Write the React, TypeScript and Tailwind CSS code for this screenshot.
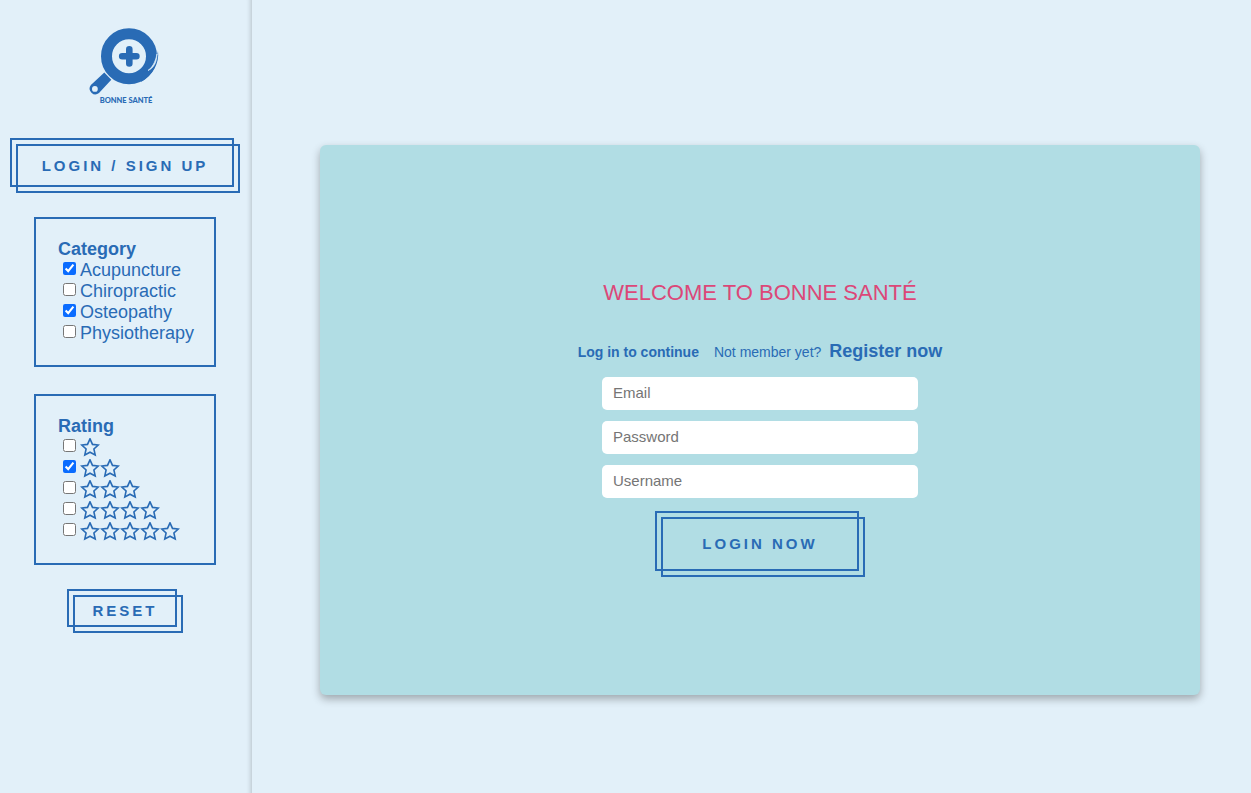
import { useState, type ReactNode } from 'react';

function Logo() {
  return (
    <svg viewBox="0 0 80 80" className="h-20 w-20" role="img" aria-label="Bonne Santé">
      <circle cx="44" cy="31.3" r="22.5" fill="none" stroke="#296bb5" strokeWidth="11" />
      <path d="M44.3 24.2v14.2M37.2 31.3h14.2" stroke="#296bb5" strokeWidth="6.6" strokeLinecap="round" />
      <path d="M73 26C74.500 38 68 50 56 57L58 47C66 44 71.500 36 73 26Z" fill="#296bb5" />
      <path d="M63 45.500C67 42.500 70.200 38 72 29C71.800 37 69 43 63 45.500Z" fill="#e2f0f9" stroke="#e2f0f9" strokeWidth="0.700" strokeLinejoin="round" />
      <path d="M19.300 47.600L26.300 54.800L14 68A5.700 5.700 0 0 1 5.900 60.100Z" fill="#296bb5" />
      <circle cx="9.900" cy="63.900" r="2.900" fill="#e2f0f9" />
      <text x="41" y="78.200" textAnchor="middle" fontFamily="Lato, sans-serif" fontWeight="900" fontSize="7.500" fill="#296bb5">
        BONNE SANTÉ
      </text>
    </svg>
  );
}

function Star() {
  return (
    <svg viewBox="0 1 20 20" className="h-5 w-5 shrink-0" aria-hidden="true">
      <path
        d="M10 1.800L12.500 7.400L18.200 8L13.900 12L15.200 17.900L10 15.200L4.800 17.900L6.100 12L1.800 8L7.500 7.400Z"
        fill="none"
        stroke="currentColor"
        strokeWidth="1.600"
      />
    </svg>
  );
}

function FramedButton({ className, children, type = 'button' }: { className: string; children: ReactNode; type?: 'button' | 'submit' }) {
  return (
    <button
      type={type}
      className={`relative cursor-pointer text-[15px] leading-4 font-bold tracking-[3px] uppercase before:absolute before:top-0 before:right-1.5 before:bottom-1.5 before:left-0 before:border-2 before:border-[#296bb5] after:absolute after:top-1.5 after:right-0 after:bottom-0 after:left-1.5 after:border-2 after:border-[#296bb5] ${className}`}
    >
      {children}
    </button>
  );
}

function FilterBox({ title, children }: { title: string; children: ReactNode }) {
  return (
    <fieldset className="w-[182px] border-2 border-[#296bb5] pt-5 pr-4 pb-[21px] pl-[22px]">
      <legend className="float-left w-full text-[18px] leading-[21px] font-bold">{title}</legend>
      <div className="clear-both">{children}</div>
    </fieldset>
  );
}

function Option({ initial = false, label, children }: { initial?: boolean; label?: string; children: ReactNode }) {
  const [checked, setChecked] = useState(initial);
  return (
    <label className="flex h-[21px] items-center gap-1 pl-[5px] text-[18px] leading-[21px]">
      <input
        type="checkbox"
        aria-label={label}
        checked={checked}
        onChange={(e) => setChecked(e.target.checked)}
        className="mb-1 h-[13px] w-[13px] shrink-0 accent-[#0a6cff]"
      />
      {children}
    </label>
  );
}

const categories = [
  { name: 'Acupuncture', checked: true },
  { name: 'Chiropractic', checked: false },
  { name: 'Osteopathy', checked: true },
  { name: 'Physiotherapy', checked: false },
];

const fields = [
  { name: 'Email', type: 'email' },
  { name: 'Password', type: 'password' },
  { name: 'Username', type: 'text' },
];

export default function App() {
  return (
    <div className="flex min-h-screen bg-[#e2f0f9] font-['Liberation_Sans',Arial,sans-serif] text-[#296bb5]">
      <aside className="flex w-[252px] shrink-0 flex-col items-center pt-[25px] pr-0.5 shadow-[inset_-6px_0_5px_-5px_rgba(0,0,0,0.2)]">
        <Logo />
        <FramedButton className="mt-[33px] h-[55px] w-[230px]">Login / Sign up</FramedButton>
        <form className="mt-6 flex flex-col items-center">
          <FilterBox title="Category">
            {categories.map((c) => (
              <Option key={c.name} initial={c.checked}>
                {c.name}
              </Option>
            ))}
          </FilterBox>
          <div className="h-[27px]" />
          <FilterBox title="Rating">
            {[1, 2, 3, 4, 5].map((n) => (
              <Option key={n} initial={n === 2} label={`${n} stars`}>
                <span className="flex">
                  {Array.from({ length: n }, (_, i) => (
                    <Star key={i} />
                  ))}
                </span>
              </Option>
            ))}
          </FilterBox>
          <FramedButton className="mt-6 h-11 w-[116px]">Reset</FramedButton>
        </form>
      </aside>
      <main className="flex flex-1 items-start pt-[145px] pr-[51px] pl-[68px]">
        <section className="flex min-h-[550px] w-full flex-col items-center rounded-md bg-[#b1dde4] pt-[134px] shadow-[0_4px_8px_rgba(0,0,0,0.3)]">
          <h1 className="text-[22px] leading-7 text-[#dc4778] uppercase">Welcome to Bonne Santé</h1>
          <div className="mt-8 flex items-baseline text-[14px] leading-6">
            <strong>Log in to continue</strong>
            <span className="ml-[15px]">Not member yet?</span>
            <a href="#register" className="ml-2 text-[18px] font-bold">
              Register now
            </a>
          </div>
          <form className="mt-[13px] flex w-[316px] flex-col items-center gap-[11px]" onSubmit={(e) => e.preventDefault()}>
            {fields.map((f) => (
              <input
                key={f.name}
                type={f.type}
                aria-label={f.name}
                placeholder={f.name}
                className="h-[33px] w-full rounded-[5px] bg-white px-[11px] pb-0.5 text-[15px] text-gray-800 placeholder:text-[#757575]"
              />
            ))}
            <FramedButton type="submit" className="mt-0.5 h-[66px] w-[210px]">
              Login now
            </FramedButton>
          </form>
        </section>
      </main>
    </div>
  );
}
